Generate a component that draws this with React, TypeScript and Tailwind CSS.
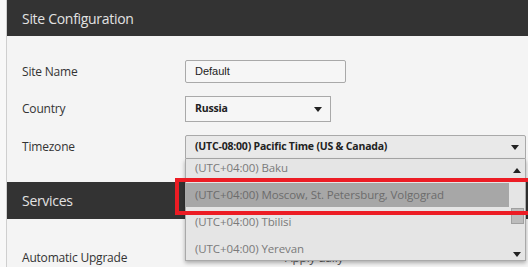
import React from "react"

const options = [
  { text: "(UTC+04:00) Baku", h: "h-[24px] -mt-[3px] mb-[3px]" },
  { text: "(UTC+04:00) Moscow, St. Petersburg, Volgograd", h: "h-[24px]" },
  { text: "(UTC+04:00) Tbilisi", h: "h-[29px]" },
  { text: "(UTC+04:00) Yerevan", h: "h-[26px]" },
]

function Caret({ up = false }: { up?: boolean }) {
  return (
    <svg width="8" height="5" viewBox="0 0 8 5">
      <path d={up ? "M0 5h8L4 0z" : "M0 0h8L4 5z"} fill="#222" />
    </svg>
  )
}

function Label({ children }: { children: React.ReactNode }) {
  return <div className="w-[163px] text-[12px] tracking-[-0.2px] text-[#333]">{children}</div>
}

export default function App() {
  return (
    <div
      className="relative w-[528px] h-[267px] overflow-hidden bg-[#f8f8f8] pl-[6px]"
      style={{ fontFamily: '"Open Sans", "Noto Sans", sans-serif' }}
    >
      <div className="h-full border-l border-[#cfcfcf] bg-[#f4f4f4]">
        <div className="h-[36px] bg-[#333333] pl-[15px] flex items-center text-[14px] tracking-[-0.3px] text-[#e2e2e2]">
          Site Configuration
        </div>

        <div className="pl-[15px] pt-[24px]">
          <div className="flex items-center h-[23px]">
            <Label>Site Name</Label>
            <div
              className="w-[161px] h-[23px] border border-[#a9a9a9] rounded-[2px] bg-[#f6f6f6] pl-[9px] flex items-center text-[11px] text-[#222]"
              style={{ fontFamily: '"Liberation Sans", Arial, sans-serif' }}
            >
              Default
            </div>
          </div>

          <div className="flex items-center h-[26px] mt-[13px]">
            <Label>Country</Label>
            <div className="w-[146px] h-[26px] border border-[#a9a9a9] bg-[#f6f6f6] pl-[9px] pr-[8px] flex items-center justify-between text-[10.5px] tracking-[-0.2px] font-bold text-[#222]">
              <span>Russia</span>
              <Caret />
            </div>
          </div>

          <div className="flex items-center h-[24px] mt-[13px]">
            <Label>Timezone</Label>
            <div className="relative w-[341px] h-[24px]">
              <div className="h-full border border-[#a9a9a9] rounded-t-[2px] bg-[#e9e9e9] pl-[9px] pr-[6px] flex items-center justify-between text-[10.5px] tracking-[-0.2px] font-bold text-[#222]">
                <span>(UTC-08:00) Pacific Time (US &amp; Canada)</span>
                <Caret />
              </div>
              <div className="absolute left-0 right-0 top-full h-[102px] border border-t-0 border-[#a9a9a9] bg-[#e5e5e5] shadow-[0_2px_4px_rgba(0,0,0,0.3)] flex overflow-hidden z-10">
                <div className="flex-1">
                  {options.map((o, i) => (
                    <div
                      key={o.text}
                      className={
                        o.h +
                        " pl-[9px] flex items-center text-[11.5px] tracking-[-0.1px] " +
                        (i === 1 ? "bg-[#a7a7a7] text-[#6c6c6c]" : "text-[#7a7a7a]")
                      }
                    >
                      {o.text}
                    </div>
                  ))}
                </div>
                <div className="w-[16px] flex flex-col items-center pt-[9px] pb-[3px]">
                  <Caret up />
                  <div className="w-[13px] h-[16px] mt-[35px] bg-[#bcbcbc] border border-[#a0a0a0]" />
                  <div className="mt-auto">
                    <Caret />
                  </div>
                </div>
              </div>
            </div>
          </div>
        </div>

        <div className="mt-[23px] h-[37px] bg-[#333333] pl-[15px] flex items-center text-[14px] tracking-[-0.3px] text-[#e2e2e2]">
          Services
        </div>

        <div className="pl-[15px] pt-[30px] flex items-center">
          <Label>Automatic Upgrade</Label>
          <div className="text-[12px] tracking-[-0.2px] text-[#555] pl-[100px]">Apply daily</div>
        </div>
      </div>

      <div className="absolute left-[175px] top-[178px] w-[400px] h-[37px] border-[4px] border-[#ec1c24] z-20" />
    </div>
  )
}
